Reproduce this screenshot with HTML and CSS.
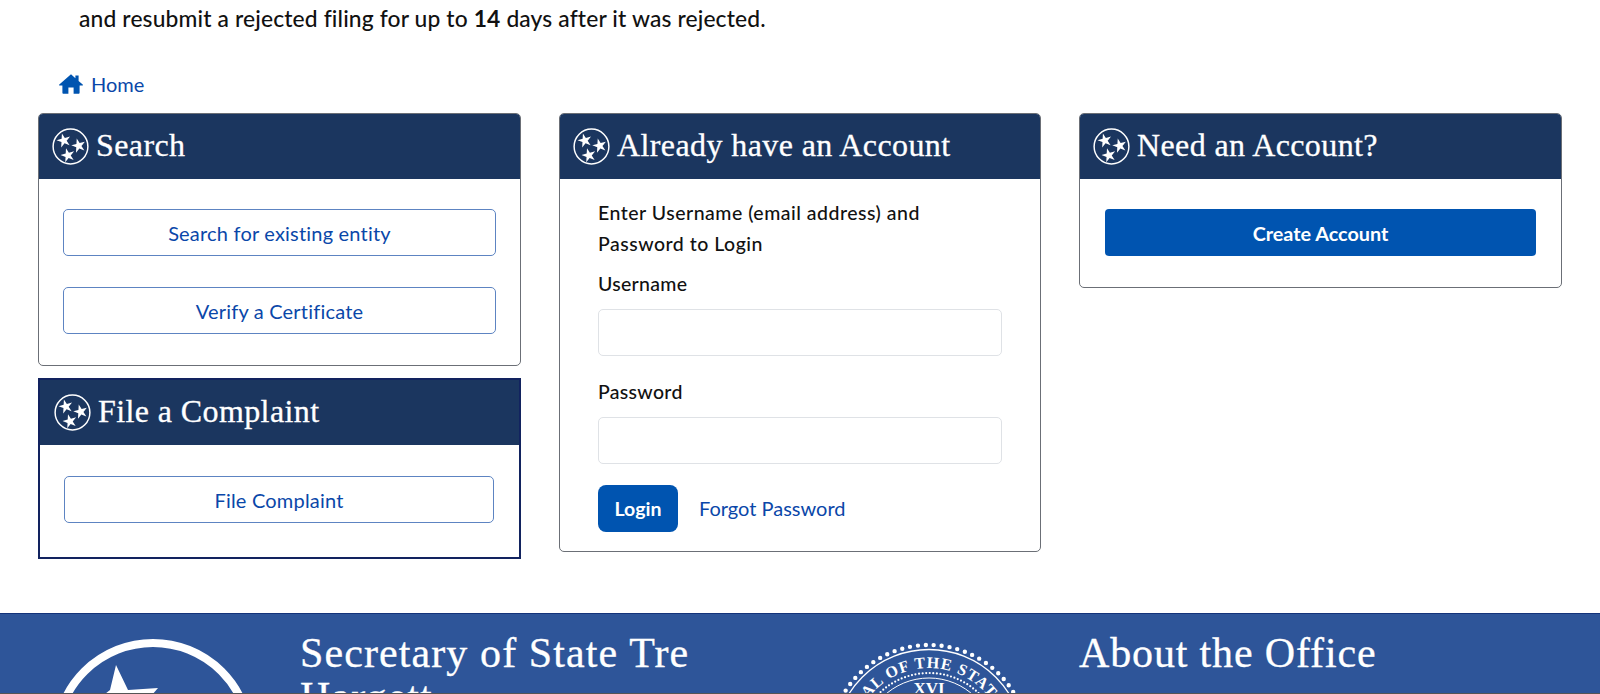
FILE: index.html
```html
<!DOCTYPE html>
<html lang="en">
<head>
<meta charset="utf-8">
<title>Sign in</title>
<link rel="stylesheet" href="styles.css">
</head>
<body>
<svg class="defs" width="0" height="0" aria-hidden="true">
  <defs>
    <polygon id="star" points="0,-10 2.25,-3.09 9.51,-3.09 3.63,1.18 5.88,8.09 0,3.82 -5.88,8.09 -3.63,1.18 -9.51,-3.09 -2.25,-3.09"/>
    <symbol id="tristar" viewBox="0 0 100 100">
      <circle cx="50" cy="50" r="47" fill="none" stroke="#fff" stroke-width="4"/>
      <use href="#star" fill="#fff" transform="translate(32 34) rotate(-15) scale(2)"/>
      <use href="#star" fill="#fff" transform="translate(72 48) rotate(-15) scale(2)"/>
      <use href="#star" fill="#fff" transform="translate(43 74) rotate(-15) scale(2)"/>
    </symbol>
  </defs>
</svg>
<main class="page">
  <p class="notice">and resubmit a rejected filing for up to <b>14</b> days after it was rejected.</p>
  <nav class="crumb">
    <a href="#" class="crumb-link">
      <svg class="home-icon" viewBox="0 0 24 20"><path d="M12 0.2 0.3 10.4c-.5.5-.2 1.2.5 1.2H3.4v7.2c0 .6.5 1 1 1h5v-6.2h5.2v6.2h5c.5 0 1-.4 1-1v-7.2h2.6c.7 0 1-.7.5-1.2L19.6 7V1.6h-3.2v2.6Z"/></svg>
      Home
    </a>
  </nav>
  <div class="columns">
    <div class="stack">
      <section class="card card-search">
        <h2 class="card-head"><svg class="tristar"><use href="#tristar"/></svg>Search</h2>
        <div class="card-body btn-list">
          <a href="#" class="btn-outline">Search for existing entity</a>
          <a href="#" class="btn-outline">Verify a Certificate</a>
        </div>
      </section>
      <section class="card card-complaint">
        <h2 class="card-head"><svg class="tristar"><use href="#tristar"/></svg>File a Complaint</h2>
        <div class="card-body complaint-body">
          <a href="#" class="btn-outline">File Complaint</a>
        </div>
      </section>
    </div>
    <section class="card card-login">
      <h2 class="card-head"><svg class="tristar"><use href="#tristar"/></svg>Already have an Account</h2>
      <form class="login-body">
        <p class="login-intro">Enter Username (email address) and Password to Login</p>
        <label class="field-label">Username</label>
        <input class="field-input" type="text">
        <label class="field-label second">Password</label>
        <input class="field-input" type="password">
        <div class="login-actions">
          <button type="button" class="btn-login">Login</button>
          <a href="#" class="forgot">Forgot Password</a>
        </div>
      </form>
    </section>
    <section class="card card-create">
      <h2 class="card-head"><svg class="tristar"><use href="#tristar"/></svg>Need an Account?</h2>
      <div class="create-body"><a href="#" class="btn-solid">Create Account</a></div>
    </section>
  </div>
</main>
<footer class="footer">
  <svg class="foot-logo" viewBox="0 0 204 204">
    <circle cx="102" cy="102" r="97" fill="none" stroke="#fff" stroke-width="8"/>
    <polygon fill="#fff" points="65,27 77,52 107,50 88,72 98,110 65,92 34,110 44,80 30,75 59,52"/>
  </svg>
  <h2 class="foot-name">Secretary of State Tre Hargett</h2>
  <svg class="foot-seal" viewBox="0 0 220 220">
    <defs><path id="sealarc" d="M 34 110 A 76 76 0 0 1 186 110"/></defs>
    <circle cx="110" cy="110" r="99" fill="none" stroke="#fff" stroke-width="4.4" stroke-linecap="round" stroke-dasharray="0 7.975"/>
    <circle cx="110" cy="110" r="94.5" fill="none" stroke="#fff" stroke-width="1.3"/>
    <circle cx="110" cy="110" r="71" fill="none" stroke="#fff" stroke-width="2.2" stroke-linecap="round" stroke-dasharray="0 3.6"/>
    <circle cx="110" cy="110" r="66" fill="none" stroke="#fff" stroke-width="1"/>
    <text class="seal-text"><textPath href="#sealarc" startOffset="48%" text-anchor="middle">SEAL OF THE STATE</textPath></text>
    <text class="seal-num" x="110" y="60" text-anchor="middle">XVI</text>
  </svg>
  <h2 class="foot-about">About the Office</h2>
</footer>
</body>
</html>
```
FILE: styles.css
```css
* { box-sizing: border-box; }
html, body { margin: 0; height: 694px; overflow: hidden; background: #fff; }
body {
  position: relative;
  font-family: "Lato", "Liberation Sans", sans-serif;
  color: #111;
  font-size: 18.5px;
}
body::after {
  content: "";
  position: absolute;
  left: 0; right: 0; bottom: 0;
  height: 1px;
  background: #555;
}
.defs { position: absolute; }
.page { padding: 0 39px 0 38px; height: 613px; }
.notice { margin: 0; padding: 3px 0 0 41px; font-size: 22.8px; line-height: 30px; font-weight: 500; letter-spacing: .15px; }
.notice b { font-weight: 700; }
.crumb { margin-top: 37px; height: 43px; padding-left: 21px; }
.crumb-link { display: inline-flex; align-items: center; gap: 8px; height: 28px; color: #0a47a9; text-decoration: none; font-size: 20px; }
.home-icon { width: 24px; height: 20px; fill: #0054b0; }
.columns { display: grid; grid-template-columns: 483px 482px 483px; column-gap: 38px; align-items: start; }
.stack { display: flex; flex-direction: column; gap: 12px; }
.card { border: 1px solid #6b6f76; border-radius: 5px; overflow: hidden; background: #fff; }
.card-head {
  margin: 0; height: 65px; padding: 0 0 2px 13px; display: flex; align-items: center; gap: 7px;
  background: #1b365f; color: #fff; font: 400 32px "Liberation Serif", serif; letter-spacing: .4px;
  -webkit-text-stroke: .3px #fff;
}
.tristar { width: 37px; height: 37px; flex: none; position: relative; top: 1px; }
.card-body { padding: 30px 24px 0; }
.btn-list { display: flex; flex-direction: column; gap: 31px; height: 186px; }
.btn-outline {
  display: flex; align-items: center; justify-content: center; height: 47px;
  border: 1px solid #5d84c2; border-radius: 5px; color: #0a47a9; text-decoration: none; font-size: 20px; letter-spacing: .2px;
}
.card-complaint { border: 2px solid #12235f; border-radius: 0; height: 181px; }
.card-complaint .card-head { margin-top: -1px; height: 66px; padding-left: 14px; }
.complaint-body { padding: 31px 25px 0 24px; }
.card-login { height: 439px; }
.login-body { padding: 19px 38px 0 38px; }
.login-intro { margin: 0; font-size: 19.5px; line-height: 30.5px; font-weight: 500; width: 345px; letter-spacing: .5px; }
.field-label { display: block; margin-top: 10px; font-size: 19.5px; line-height: 30px; font-weight: 500; letter-spacing: .3px; }
.field-label.second { margin-top: 21px; }
.field-input { display: block; width: 404px; height: 47px; margin-top: 10px; border: 1px solid #dfe2e6; border-radius: 5px; background: #fff; }
.login-actions { display: flex; align-items: center; gap: 21px; margin-top: 21px; }
.btn-login { width: 80px; height: 47px; border: 0; border-radius: 8px; background: #0054b0; color: #fff; font: 700 19.5px "Lato", sans-serif; }
.forgot { color: #0a47a9; text-decoration: none; font-size: 20px; position: relative; top: -1px; }
.card-create { height: 175px; }
.create-body { padding: 30px 25px 0 25px; }
.btn-solid {
  display: flex; align-items: center; justify-content: center; height: 47px; border-radius: 4px;
  background: #0054b0; color: #fff; text-decoration: none; font-size: 19.8px; font-weight: 700;
}
.footer {
  height: 240px; background: #2e5599; border-top: 1px solid #14337a; color: #fff;
  display: grid; grid-template-columns: 300px 480px 299px 1fr; align-items: start;
}
.foot-logo { width: 204px; height: 204px; margin: 24px 0 0 51px; }
.foot-name, .foot-about { margin: 0; padding-top: 17px; font: 400 42px/44px "Liberation Serif", serif; letter-spacing: 1.1px; -webkit-text-stroke: .3px #fff; }
.foot-about { letter-spacing: .85px; }
.foot-name { width: 440px; }
.foot-seal { width: 220px; height: 220px; margin: 20px 0 0 39px; }
.seal-text { font: 700 16px "Liberation Serif", serif; fill: #fff; letter-spacing: 1px; }
.seal-num { font: 700 17px "Liberation Serif", serif; fill: #fff; }
```
